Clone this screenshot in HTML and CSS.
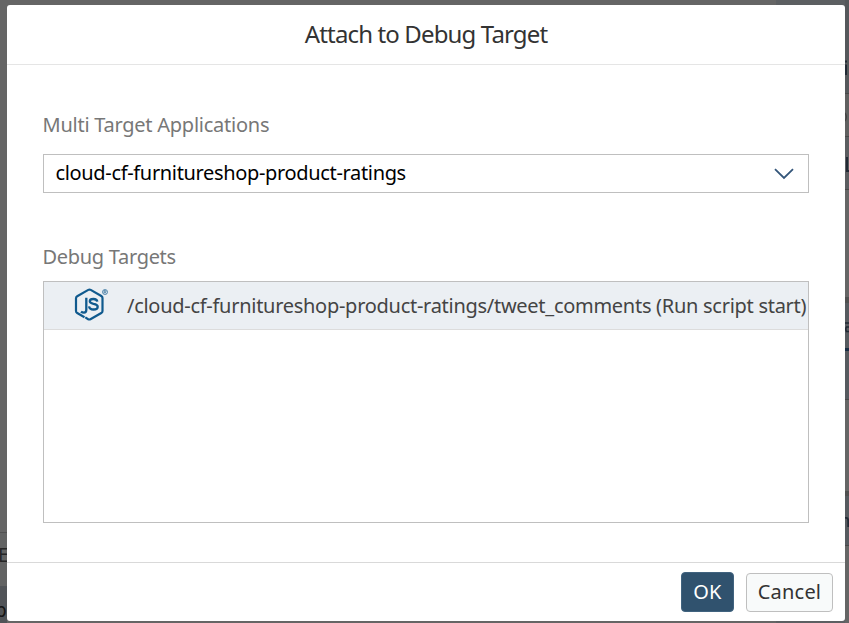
FILE: index.html
```html
<!DOCTYPE html>
<html lang="en">
<head>
<meta charset="utf-8">
<title>Attach to Debug Target</title>
<link rel="stylesheet" href="styles.css">
</head>
<body>
<div class="screen">
  <div class="edge edge-left" aria-hidden="true">
    <div class="pane tall"></div>
    <div class="pane row"><span class="cut-e">E</span></div>
    <div class="pane status"><span class="cut-p">p</span></div>
  </div>
  <section class="dialog" role="dialog" aria-labelledby="title">
    <header class="dialog-header"><h1 id="title">Attach to Debug Target</h1></header>
    <main class="dialog-body">
      <div class="label label-apps">Multi Target Applications</div>
      <div class="select">
        <span class="select-value">cloud-cf-furnitureshop-product-ratings</span>
        <svg class="chevron" width="20" height="12" viewBox="0 0 20 12"><path d="M1 1.2 10 10 19 1.2" fill="none" stroke="#34567a" stroke-width="1.8"/></svg>
      </div>
      <div class="label label-targets">Debug Targets</div>
      <div class="list">
        <div class="item">
          <svg class="node-icon" width="34" height="34" viewBox="0 0 34 34" fill="none" stroke="#105a8e">
            <path d="M10.5 29.2 3.2 25Q2 24.3 2 22.9V10.2Q2 8.9 3.2 8.2L14.3 1.9Q15.5 1.2 16.7 1.9L27.3 8Q28.5 8.7 28.5 10V22.9Q28.5 24.3 27.3 25L16.4 31.2Q15.3 31.8 14.2 31.2L11.3 29.4" stroke-width="2.2"/>
            <path d="M12.3 9.8V21.8Q12.3 24.7 10 24.7Q8.3 24.7 7 23.6" stroke-width="2.3"/>
            <path d="M23.3 13.7C23 11.6 21.6 11 19.4 11C17 11 15.8 11.8 15.8 13.3C15.8 15 17.3 15.4 19.5 15.8C22.2 16.2 23.7 16.8 23.7 18.7C23.7 20.6 22.1 21.5 19.5 21.5C16.7 21.5 15.3 20.5 15.1 18.4" stroke-width="2.3"/>
            <circle cx="31" cy="4" r="2.5" stroke-width=".65"/>
            <path d="M30.1 5.5V2.6H31.2Q32 2.6 32 3.4T31.2 4.1H30.1M31.1 4.1 32 5.5" stroke-width=".6"/>
          </svg>
          <span class="item-text">/cloud-cf-furnitureshop-product-ratings/tweet_comments (Run script start)</span>
        </div>
      </div>
    </main>
    <footer class="dialog-footer">
      <button class="button primary">OK</button>
      <button class="button">Cancel</button>
    </footer>
  </section>
  <div class="edge edge-right" aria-hidden="true">
    <svg width="4" height="623" viewBox="0 0 4 623" fill="none" stroke="#222a35">
      <path d="M1 60.5V62.5M1 64.5V75" stroke-width="2"/>
      <path d="M0 113Q2.5 117 0 121" stroke="#444" stroke-width="1.5"/>
      <path d="M2 157V171H4" stroke-width="2"/>
      <path d="M0 323H4M4 327H1.5Q0 329 1.5 331.5H4" stroke-width="1.6"/>
      <path d="M0 518Q3.2 517 3.2 521V527" stroke-width="1.8"/>
    </svg>
  </div>
</div>
</body>
</html>
```
FILE: styles.css
```css
* { box-sizing: border-box; }
body { margin: 0; font-family: "Noto Sans", sans-serif; font-size: 20px; overflow: hidden; }
.screen { width: 849px; height: 623px; display: grid; grid-template-columns: 7px 838px 4px; background: linear-gradient(90deg, #656565 776px, #5c5f62 776px); }
.edge { overflow: hidden; height: 623px; }
.edge svg { display: block; }
.edge-left { display: flex; flex-direction: column; }
.tall { height: 533px; border-bottom: 1px solid #515151; }
.row { height: 53px; background: #626363; color: #252525; }
.status { height: 37px; background: #515458; color: #151515; }
.cut-e, .cut-p { display: block; line-height: 44px; font-size: 19px; }
.cut-e { margin-left: -2px; }
.cut-p { margin-left: -5px; line-height: 48px; }
.edge-right { background: linear-gradient(#55585b 0 93px, #484848 93px 94px, #606060 94px 136px, #484848 136px 137px, #5b5d60 137px 189px, #484848 189px 190px, #656565 190px 297px, #505050 297px 303px, #565a5f 303px 348px, #182d43 348px 351px, #565a5f 351px 399px, #484848 399px 400px, #656565 400px 491px, #505050 491px 496px, #565a5f 496px 545px, #484848 545px 546px, #656565 546px); }
.dialog { margin-top: 5px; height: 616px; background: #fff; border-radius: 3px; display: flex; flex-direction: column; overflow: hidden; }
.dialog-header { height: 60px; border-bottom: 1px solid #e5e5e5; }
h1 { margin: 0; font-size: 24px; font-weight: 400; line-height: 58px; text-align: center; color: #333; letter-spacing: -.86px; }
.dialog-body { flex: 1; padding: 44px 36px 0; }
.label { color: #777; height: 45px; line-height: 32px; white-space: nowrap; letter-spacing: -.25px; text-indent: -.5px; }
.select { height: 39px; border: 1px solid #bfbfbf; display: flex; align-items: center; justify-content: space-between; padding: 0 14px 2px 11.5px; color: #000; }
.select-value { letter-spacing: -.34px; white-space: nowrap; }
.chevron { margin-top: 3px; }
.label-targets { margin-top: 48px; height: 40px; letter-spacing: -.3px; }
.list { height: 242px; border: 1px solid #bfbfbf; }
.item { height: 48px; background: #ebeff3; border-bottom: 1px solid #dcdcdc; display: flex; align-items: center; padding-left: 30px; color: #444; }
.node-icon { flex: none; margin-bottom: 2px; }
.item-text { margin-left: 19px; white-space: nowrap; letter-spacing: -.28px; }
.dialog-footer { height: 59px; border-top: 1px solid #d9d9d9; display: flex; justify-content: flex-end; gap: 12px; padding: 9px 12px 0 0; }
.button { width: 87px; height: 39px; margin-top: 1px; padding: 0 0 2px; border: 1px solid #bfbfbf; border-radius: 4px; background: #f8fafa; color: #333; font: 20px "Noto Sans", sans-serif; letter-spacing: .2px; }
.primary { width: 53px; height: 40px; margin-top: 0; background: #30526e; border-color: #41637f; color: #fff; }
```
